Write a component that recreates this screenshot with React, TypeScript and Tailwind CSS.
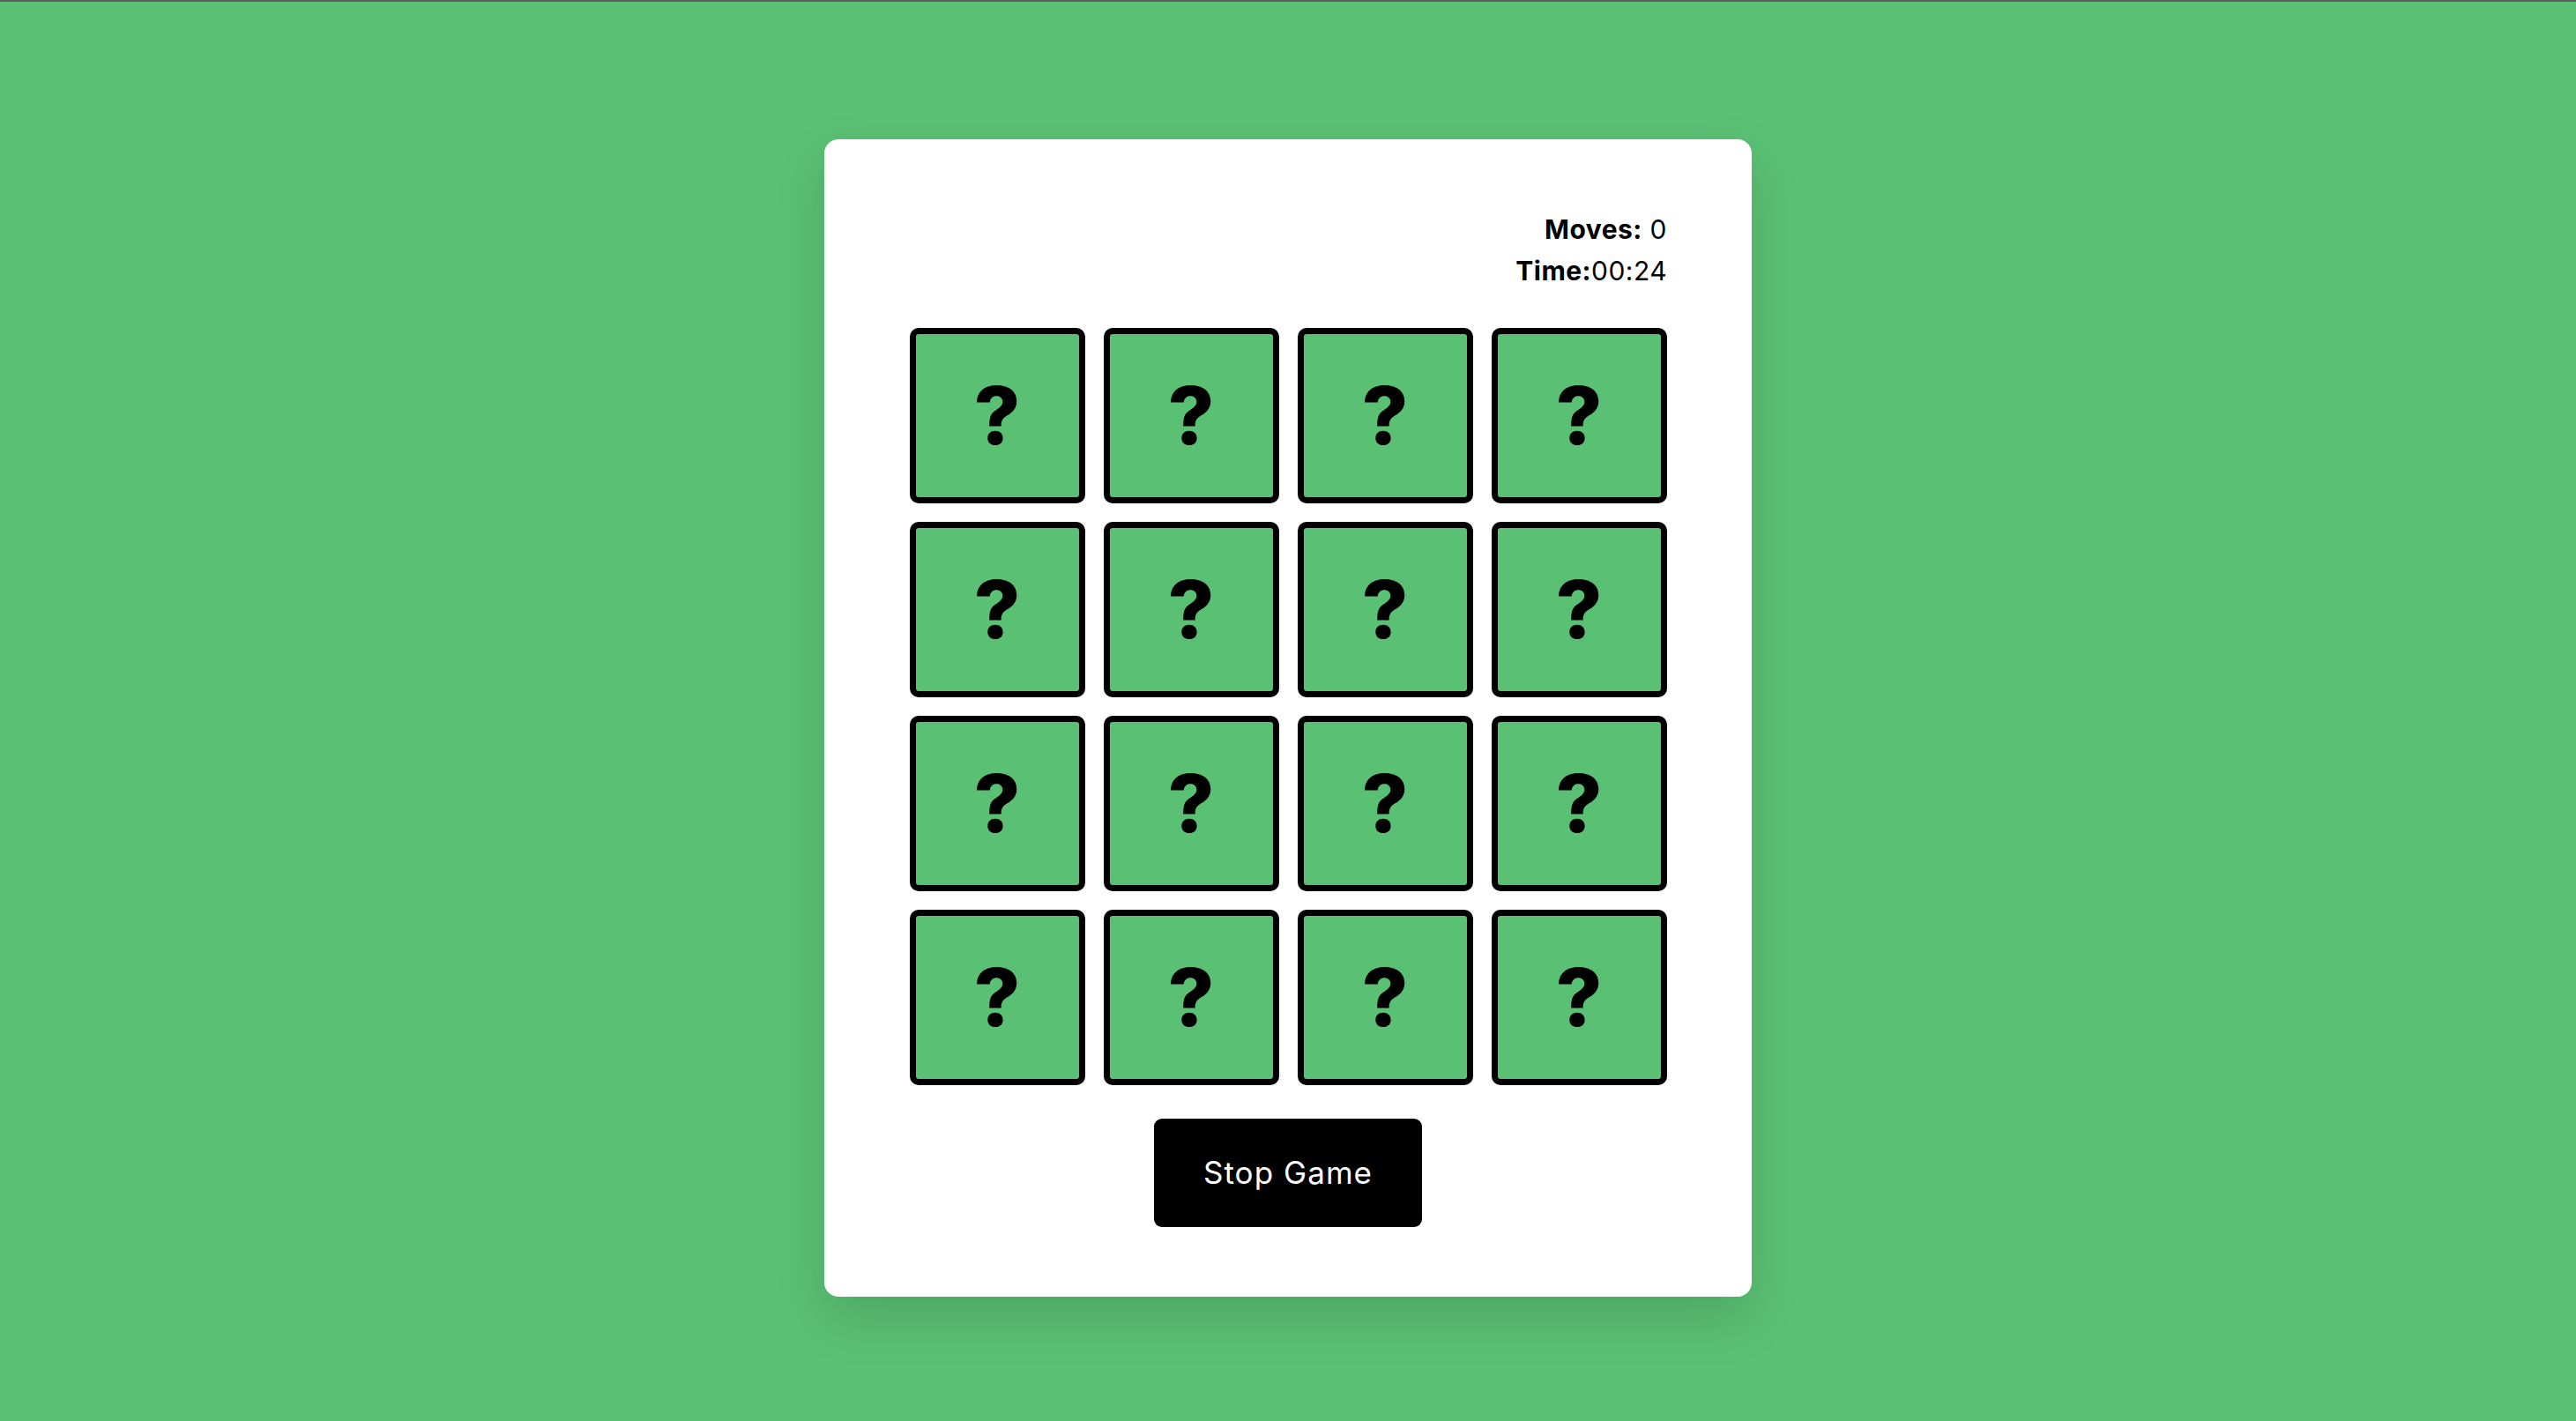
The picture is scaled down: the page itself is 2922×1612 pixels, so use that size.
import React from 'react';

const FONT = { fontFamily: 'Inter, "Liberation Sans", sans-serif' };

const Tile: React.FC = () => (
  <div className="w-[199px] h-[199px] rounded-[10px] border-[7px] border-black bg-[#5ac174] flex items-center justify-center">
    <span className="text-[91px] font-extrabold leading-none text-black">?</span>
  </div>
);

const App: React.FC = () => {
  const tiles = Array.from({ length: 16 }, (_, i) => i);

  return (
    <div className="min-h-screen bg-[#5ac174] flex flex-col" style={FONT}>
      {/* garis atas browser */}
      <div className="h-[2px] bg-[#5c5c5c]" />

      <div className="flex justify-center pt-[156px]">
        <div className="w-[1052px] bg-white rounded-[16px] shadow-[0_24px_60px_rgba(0,0,0,0.14)] px-[96px] pt-[79px] pb-[79px] flex flex-col items-center">
          {/* Info skor */}
          <div className="w-full flex flex-col items-end text-[30px] leading-[47px] tracking-[0.015em] text-black">
            <p>
              <span className="font-bold">Moves:</span> 0
            </p>
            <p>
              <span className="font-bold">Time:</span>00:24
            </p>
          </div>

          {/* Papan kartu */}
          <div className="mt-[41px] grid grid-cols-4 gap-[21px]">
            {tiles.map((i) => (
              <Tile key={i} />
            ))}
          </div>

          <button className="mt-[38px] w-[304px] h-[123px] rounded-[9px] bg-black text-white text-[35px] tracking-[0.03em] font-normal">
            Stop Game
          </button>
        </div>
      </div>
    </div>
  );
};

export default App;
